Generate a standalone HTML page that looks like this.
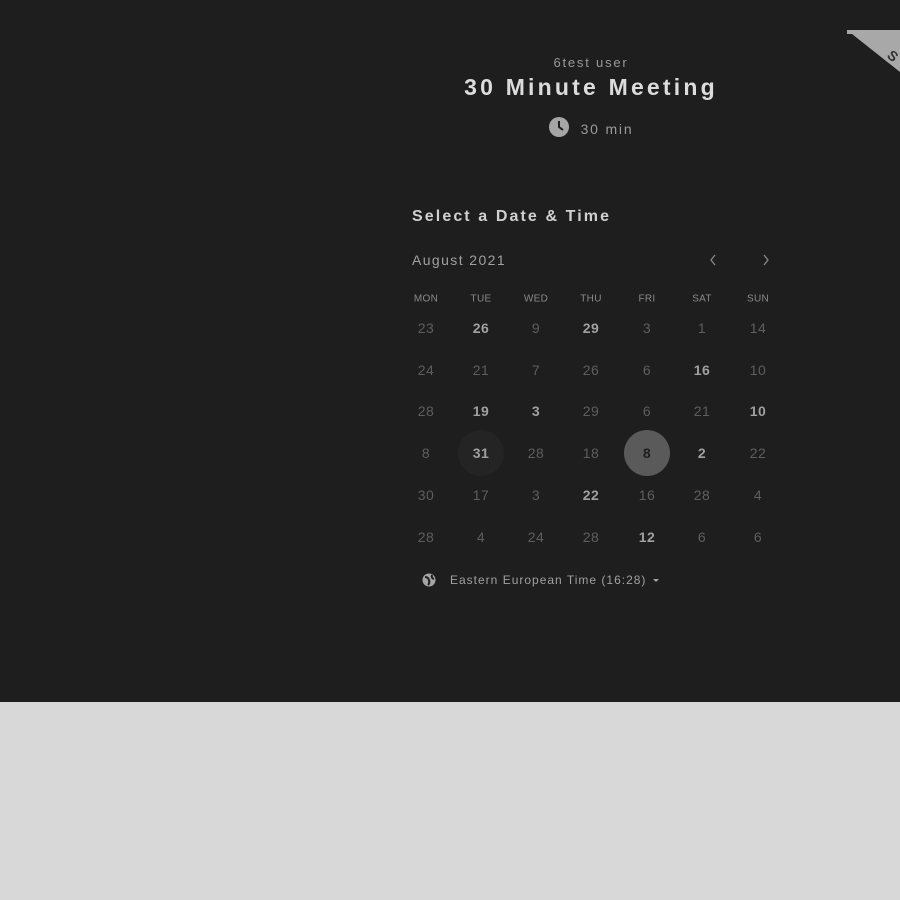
<!DOCTYPE html>
<html><head><style>
body{margin:0;width:900px;height:900px;background:#d8d8d8;font-family:"Liberation Sans",sans-serif;position:relative;overflow:hidden}
.top{position:absolute;left:0;top:0;width:900px;height:702px;background:#1e1e1e}
.t{position:absolute;white-space:nowrap;transform:translateX(-50%)}
.d{position:absolute;transform:translate(-50%,-50%);font-size:14px;color:#5e5e5e;letter-spacing:0.5px}
.b{color:#a0a0a0;font-weight:bold}
.h{position:absolute;transform:translate(-50%,-50%);font-size:10px;color:#8a8a8a;letter-spacing:0.3px}
</style></head><body>
<div class="top">
<svg style="position:absolute;left:0;top:0" width="900" height="702">
<polygon points="847,30 900,30 900,72 852,34 847,34" fill="#a8a8a8"/>
<text x="890" y="58" font-size="14" font-weight="bold" fill="#333" font-family="Liberation Sans" transform="rotate(40 890 52)">S</text>
<circle cx="559" cy="127" r="10" fill="#a5a5a5"/>
<path d="M559 121v6l4 3" stroke="#1e1e1e" stroke-width="2" fill="none"/>
<circle cx="481" cy="453" r="23" fill="#242424"/>
<circle cx="647" cy="453" r="23" fill="#5a5a5a"/>
<circle cx="429" cy="580" r="6.5" fill="#a5a5a5"/>
<path d="M425 577q3 0 4 3t-1 5M432 575q-1 3 2 4" stroke="#1e1e1e" stroke-width="2" fill="none"/>
<path d="M653 579h6l-3 3z" fill="#a5a5a5"/>
<path d="M715 255l-4 5 4 5M764 255l4 5-4 5" stroke="#888" stroke-width="1.3" fill="none"/>
</svg>
<div class="t" style="left:591px;top:55px;font-size:13px;color:#9a9a9a;letter-spacing:1.8px">6test user</div>
<div class="t" style="left:591px;top:74px;font-size:23px;font-weight:bold;color:#dcdcdc;letter-spacing:3.2px">30 Minute Meeting</div>
<div class="t" style="left:607px;top:121px;font-size:14px;color:#9a9a9a;letter-spacing:1.8px">30 min</div>
<div style="position:absolute;left:412px;top:208px;font-size:16px;font-weight:bold;color:#d0d0d0;letter-spacing:2.1px">Select a Date &amp; Time</div>
<div style="position:absolute;left:412px;top:252px;font-size:14px;color:#a0a0a0;letter-spacing:1.4px">August 2021</div>
<div style="position:absolute;left:450px;top:573px;font-size:12px;color:#a0a0a0;letter-spacing:1px">Eastern European Time (16:28)</div>
<div class="h" style="left:426px;top:299px">MON</div><div class="h" style="left:481px;top:299px">TUE</div><div class="h" style="left:536px;top:299px">WED</div><div class="h" style="left:591px;top:299px">THU</div><div class="h" style="left:647px;top:299px">FRI</div><div class="h" style="left:702px;top:299px">SAT</div><div class="h" style="left:758px;top:299px">SUN</div>
<div id="g"></div>
</div>
<script>
var r=[[23,'*26',9,'*29',3,1,14],[24,21,7,26,6,'*16',10],[28,'*19','*3',29,6,21,'*10'],[8,'*31',28,18,'*8','*2',22],[30,17,3,'*22',16,28,4],[28,4,24,28,'*12',6,6]];
var xs=[426,481,536,591,647,702,758],ys=[328,370,411,453,495,537],h='';
r.forEach((row,i)=>row.forEach((v,j)=>{var s=String(v),b=s[0]=='*';if(b)s=s.slice(1);var st=(i==3&&j==4)?'color:#1e1e1e;':'';h+='<div class="d'+(b?' b':'')+'" style="'+st+'left:'+xs[j]+'px;top:'+ys[i]+'px">'+s+'</div>';}));
document.getElementById('g').innerHTML=h;
</script>
</body></html>
